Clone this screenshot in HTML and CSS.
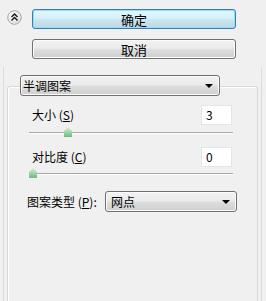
FILE: index.html
```html
<!DOCTYPE html>
<html>
<head>
<meta charset="utf-8">
<link rel="stylesheet" href="styles.css">
</head>
<body>
<div class="top">
  <div class="collapse">
    <svg width="15" height="15" viewBox="0 0 15 15">
      <defs>
        <radialGradient id="cg" cx="40%" cy="35%" r="70%">
          <stop offset="0" stop-color="#ffffff"/>
          <stop offset="1" stop-color="#dcdcdc"/>
        </radialGradient>
      </defs>
      <circle cx="7.5" cy="7.5" r="6.8" fill="url(#cg)" stroke="#a8a8a8" stroke-width="1"/>
      <path d="M4.5 7 L7.5 4 L10.5 7 M4.5 10.5 L7.5 7.5 L10.5 10.5" fill="none" stroke="#111" stroke-width="1.4"/>
    </svg>
  </div>
  <div class="buttons">
    <div class="btn btn-ok">确定</div>
    <div class="btn btn-cancel">取消</div>
  </div>
</div>
<div class="panel">
  <div class="group">
    <div class="combo combo-head"><span>半调图案</span><span class="arrow"></span></div>
    <div class="row">
      <span class="label">大小 (<u>S</u>)</span>
      <div class="field">3</div>
    </div>
    <div class="slider"><div class="track"></div><div class="thumb" style="left:35px"></div></div>
    <div class="row row2">
      <span class="label">对比度 (<u>C</u>)</span>
      <div class="field">0</div>
    </div>
    <div class="slider slider2"><div class="track"></div><div class="thumb" style="left:0px"></div></div>
    <div class="row row3">
      <span class="label3">图案类型 (<u>P</u>):</span>
      <div class="combo combo-type"><span>网点</span><span class="arrow"></span></div>
    </div>
  </div>
</div>
</body>
</html>
```
FILE: styles.css
```css
html, body {
  margin: 0;
  padding: 0;
}
body {
  width: 266px;
  height: 301px;
  overflow: hidden;
  background: #f0f0f0;
  font-family: "Noto Sans CJK SC", "Noto Sans", sans-serif;
  font-size: 12px;
  color: #000;
}
.top {
  display: flex;
  padding: 9px 0 0 7px;
}
.collapse {
  width: 15px;
  height: 15px;
  margin-top: 1px;
  margin-right: 10px;
}
.collapse svg { display: block; }
.buttons {
  display: flex;
  flex-direction: column;
  gap: 10px;
  width: 204px;
}
.btn {
  box-sizing: border-box;
  height: 20px;
  border-radius: 3px;
  display: flex;
  align-items: center;
  justify-content: center;
  font-size: 13px;
  line-height: 1;
}
.btn-ok {
  border: 1px solid #3b7fb0;
  background: linear-gradient(#e5f6fd, #d5f1fd 45%, #c9e6f2 55%, #c4d6de);
  box-shadow: inset 0 0 0 1px #8fe0f7;
}
.btn-cancel {
  border: 1px solid #707070;
  background: linear-gradient(#f2f2f2, #ebebeb 45%, #dddddd 55%, #cfcfcf);
  box-shadow: inset 0 0 0 1px #fbfbfb;
}
.panel {
  box-sizing: border-box;
  margin: 8px 4px 0 3px;
  height: 234px;
  border-left: 1px solid #dcdcdc;
  border-right: 1px solid #dcdcdc;
  padding: 0 3px;
  display: flex;
  flex-direction: column;
}
.group {
  flex: 1;
  margin-top: 19px;
  border: 1px solid #d5d9dd;
  border-bottom: none;
  border-radius: 3px 3px 0 0;
  box-shadow: inset 1px 1px 0 #fff;
}
.combo {
  box-sizing: border-box;
  height: 21px;
  border: 1px solid #707070;
  border-radius: 3px;
  background: linear-gradient(#f2f2f2, #ebebeb 45%, #dddddd 55%, #cfcfcf);
  box-shadow: inset 0 0 0 1px #fbfbfb;
  display: flex;
  align-items: center;
  justify-content: space-between;
  padding: 0 6px 0 2px;
  line-height: 1;
}
.arrow {
  width: 0;
  height: 0;
  border-left: 4px solid transparent;
  border-right: 4px solid transparent;
  border-top: 4px solid #000;
}
.combo-head {
  width: 200px;
  margin: -12px 0 0 12px;
}
.row {
  display: flex;
  align-items: center;
  justify-content: space-between;
  margin: 9px 25px 0 24px;
  height: 20px;
}
.label { line-height: 1; }
.label u, .label3 u { text-decoration: underline; }
.field {
  box-sizing: border-box;
  width: 31px;
  height: 20px;
  background: #fff;
  border: 1px solid #e2e6ea;
  padding: 2px 0 0 4px;
  line-height: 14px;
}
.slider {
  position: relative;
  height: 11px;
  margin: 2px 24px 0 21px;
}
.slider2 { margin-top: 1px; }
.track {
  position: absolute;
  left: 0;
  right: 0;
  top: 5px;
  height: 1px;
  background: #a8a8a8;
  box-shadow: 0 1px 0 #fff;
}
.thumb {
  position: absolute;
  top: 0;
  width: 8px;
  height: 10px;
  background: linear-gradient(#d8f0d8, #6fb880);
  clip-path: polygon(50% 0, 100% 40%, 100% 100%, 0 100%, 0 40%);
}
.row2 { margin-top: 9px; }
.row3 {
  margin: 12px 20px 0 19px;
  height: 21px;
}
.label3 { line-height: 1; }
.combo-type {
  width: 132px;
  padding-left: 5px;
  font-size: 12px;
}
```
